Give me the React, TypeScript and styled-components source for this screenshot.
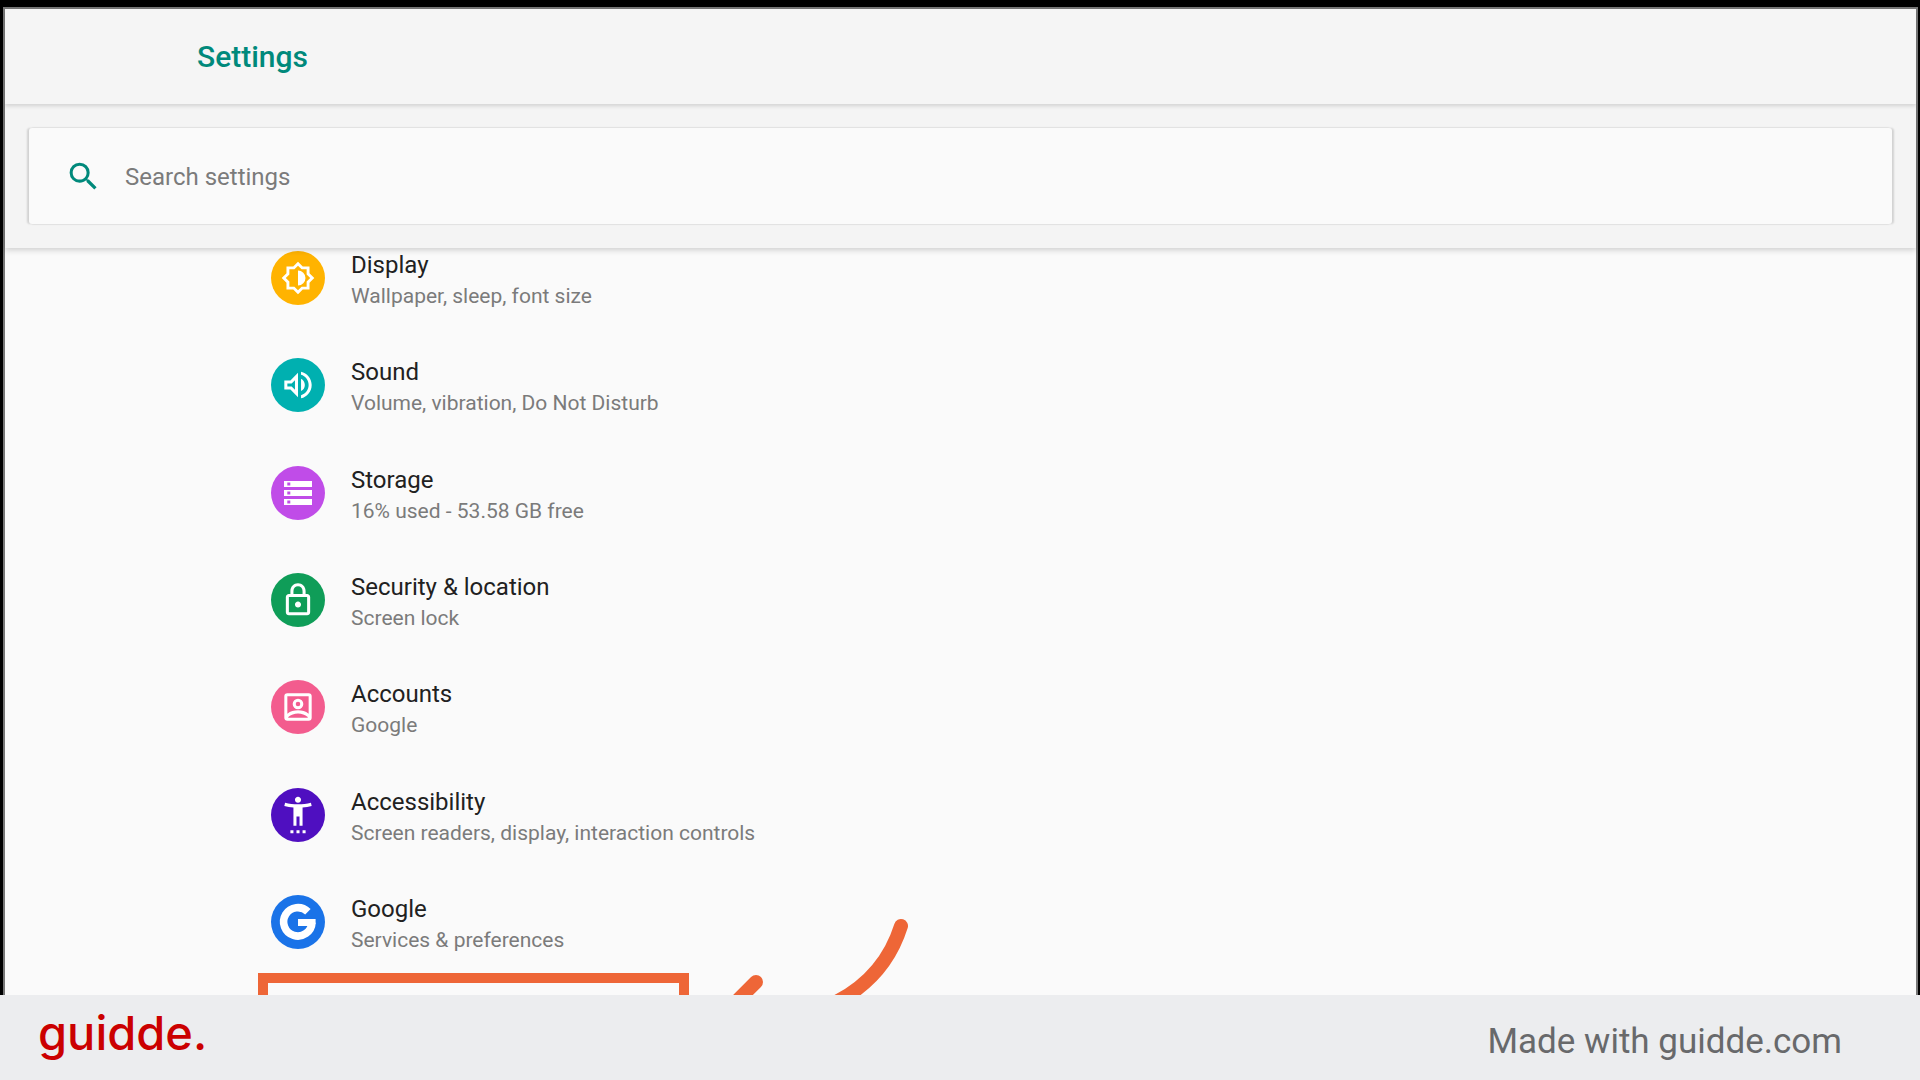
import React from "react";
import styled, { createGlobalStyle } from "styled-components";

const GlobalStyle = createGlobalStyle`
  *, *::before, *::after { box-sizing: border-box; }
  body {
    margin: 0;
    background: #000;
    font-family: Roboto, "Noto Sans", sans-serif;
  }
`;

const Page = styled.div`
  display: flex;
  flex-direction: column;
  min-height: 100vh;
`;

const Screen = styled.div`
  flex: 1;
  display: flex;
  padding: 7px 2px 0 3px;
  background: #000;
`;

const Device = styled.div`
  flex: 1;
  display: flex;
  flex-direction: column;
  min-width: 0;
  border: 2px solid #777;
  border-bottom: none;
  background: #fafafa;
`;

const Header = styled.header`
  position: relative;
  display: flex;
  align-items: center;
  height: 95px;
  padding: 0 192px;
  background: #f5f5f5;
  box-shadow: 0 2px 4px rgba(0, 0, 0, 0.14);
  z-index: 2;
`;

const Title = styled.h1`
  margin: 0;
  font-size: 30px;
  font-weight: 500;
  line-height: 36px;
  color: #00897b;
`;

const SearchArea = styled.div`
  position: relative;
  padding: 24px;
  background: #f4f4f4;
  box-shadow: 0 2px 6px rgba(0, 0, 0, 0.18);
  z-index: 1;
`;

const SearchBox = styled.label`
  display: flex;
  align-items: center;
  gap: 23px;
  height: 96px;
  padding: 0 36px;
  border-radius: 3px;
  background: #fafafa;
  box-shadow: -2px 0 2px rgba(0, 0, 0, 0.14), 2px 0 2px rgba(0, 0, 0, 0.14);
`;

const SearchIcon = styled.svg`
  flex: none;
  width: 37px;
  height: 37px;
  fill: #00897b;
`;

const SearchInput = styled.input`
  flex: 1;
  min-width: 0;
  padding: 2px 0 0;
  border: none;
  outline: none;
  background: transparent;
  font-family: inherit;
  font-size: 24px;
  line-height: 28px;
  color: #212121;
  &::placeholder {
    color: #7b7b7b;
    opacity: 1;
  }
`;

const Main = styled.main`
  position: relative;
  flex: 1;
  display: flex;
  overflow: hidden;
`;

const List = styled.nav`
  flex: 1;
  display: flex;
  flex-direction: column;
  justify-content: space-between;
  gap: 24px;
  padding: 3px 266px 42px;
`;

const Row = styled.a`
  display: flex;
  align-items: flex-start;
  gap: 26px;
  color: inherit;
  text-decoration: none;
`;

const Badge = styled.span<{ $color: string }>`
  flex: none;
  display: flex;
  width: 54px;
  height: 54px;
  border-radius: 50%;
  background: ${(p) => p.$color};
`;

const Glyph = styled.svg`
  width: 54px;
  height: 54px;
  fill: #fff;
`;

const Labels = styled.span`
  display: flex;
  flex-direction: column;
  gap: 4px;
`;

const Name = styled.span`
  font-size: 24px;
  line-height: 28px;
  color: #212121;
`;

const Summary = styled.span`
  font-size: 21px;
  line-height: 26px;
  color: #7b7b7b;
`;

const Highlight = styled.div`
  position: absolute;
  left: 253px;
  top: 725px;
  width: 431px;
  height: 100px;
  border: 10px solid #ee6637;
`;

const Arrow = styled.svg`
  position: absolute;
  left: 695px;
  top: 652px;
  width: 240px;
  height: 160px;
  fill: none;
  stroke: #ee6637;
  stroke-width: 14px;
  stroke-linecap: round;
  stroke-linejoin: round;
`;

const Footer = styled.footer`
  display: flex;
  align-items: center;
  justify-content: space-between;
  height: 85px;
  padding: 0 78px 0 38px;
  background: #ecedef;
`;

const Brand = styled.a`
  padding-bottom: 10px;
  font-family: Inter, "Open Sans", sans-serif;
  font-size: 47px;
  font-weight: 500;
  line-height: 56px;
  color: #cb0000;
  text-decoration: none;
`;

const Credit = styled.span`
  padding-top: 8px;
  font-size: 35px;
  line-height: 42px;
  color: #68696b;
`;

// Material glyphs live on a 24-unit grid; they are padded out to fill the badge.
const Material = ({ d }: { d: string }) => (
  <Glyph viewBox="-5.76 -5.76 35.52 35.52" aria-hidden="true">
    <path fillRule="evenodd" d={d} />
  </Glyph>
);

const items = [
  {
    name: "Display",
    summary: "Wallpaper, sleep, font size",
    color: "#ffb300",
    icon: (
      <Glyph viewBox="-6.75 -6.75 37.5 37.5" aria-hidden="true">
        <path
          fillRule="evenodd"
          d="M20 15.31 23.31 12 20 8.69V4h-4.69L12 .69 8.69 4H4v4.69L.69 12 4 15.31V20h4.69L12 23.31 15.31 20H20zM18 14.48V18h-3.52L12 20.48 9.52 18H6v-3.52L3.52 12 6 9.52V6h3.52L12 3.52 14.48 6H18v3.52L20.48 12z"
        />
        <path d="M12 6.8v10.4a5.2 5.2 0 0 0 0-10.4z" />
      </Glyph>
    ),
  },
  {
    name: "Sound",
    summary: "Volume, vibration, Do Not Disturb",
    color: "#00b0b0",
    icon: (
      <Material d="M3 9v6h4l5 5V4L7 9H3zm7-.17v6.34L7.83 13H5v-2h2.83L10 8.83zM16.5 12c0-1.77-1.02-3.29-2.5-4.03v8.05c1.48-.73 2.5-2.25 2.5-4.02zM14 3.23v2.06c2.89.86 5 3.54 5 6.71s-2.11 5.85-5 6.71v2.06c4.01-.91 7-4.49 7-8.77s-2.99-7.86-7-8.77z" />
    ),
  },
  {
    name: "Storage",
    summary: "16% used - 53.58 GB free",
    color: "#c04ce8",
    icon: (
      <Glyph viewBox="0 0 54 54" aria-hidden="true">
        <path
          fillRule="evenodd"
          d="M13 15h28v6H13zM16.3 16.5v3h3v-3zM13 24h28v6H13zM16.3 25.5v3h3v-3zM13 33h28v6H13zM16.3 34.5v3h3v-3z"
        />
      </Glyph>
    ),
  },
  {
    name: "Security & location",
    summary: "Screen lock",
    color: "#0f9d58",
    icon: (
      <Material d="M18 8h-1V6c0-2.76-2.24-5-5-5S7 3.24 7 6v2H6c-1.1 0-2 .9-2 2v10c0 1.1.9 2 2 2h12c1.1 0 2-.9 2-2V10c0-1.1-.9-2-2-2zM9 6c0-1.66 1.34-3 3-3s3 1.34 3 3v2H9V6zm9 14H6V10h12v10zm-6-3c1.1 0 2-.9 2-2s-.9-2-2-2-2 .9-2 2 .9 2 2 2z" />
    ),
  },
  {
    name: "Accounts",
    summary: "Google",
    color: "#f35c8e",
    icon: (
      <Material d="M19 3H5a2 2 0 0 0-2 2v14a2 2 0 0 0 2 2h14a2 2 0 0 0 2-2V5a2 2 0 0 0-2-2zM19 5v11.4c-2-1.5-4.4-2.2-7-2.2s-5 .7-7 2.2V5zM5.6 18.5c1.8-1.5 4-2.3 6.4-2.3s4.6.8 6.4 2.3V19H5.6zM12 13.5a3.5 3.5 0 1 0 0-7 3.5 3.5 0 0 0 0 7zM12 11.5a1.5 1.5 0 1 1 0-3 1.5 1.5 0 0 1 0 3z" />
    ),
  },
  {
    name: "Accessibility",
    summary: "Screen readers, display, interaction controls",
    color: "#4f0fc0",
    icon: (
      <Material d="M20.5 4c-2.61.7-5.67 1-8.5 1s-5.89-.3-8.5-1L3 6c1.86.5 4 .83 6 1v12h2v-6h2v6h2V7c2-.17 4.14-.5 6-1zM12 4c1.1 0 2-.9 2-2s-.9-2-2-2-2 .9-2 2 .9 2 2 2zM7 24h2v-2H7zM11 24h2v-2h-2zM15 24h2v-2h-2z" />
    ),
  },
  {
    name: "Google",
    summary: "Services & preferences",
    color: "#1a73e8",
    icon: (
      <Glyph viewBox="0 0 54 54" aria-hidden="true">
        <path
          d="M36.9 16.8A14.2 14.2 0 1 0 41 27.5"
          fill="none"
          stroke="#fff"
          strokeWidth="7.6"
        />
        <path d="M27 24h17.6v4l-1.5 3H27z" />
      </Glyph>
    ),
  },
];

export default function App() {
  return (
    <>
      <GlobalStyle />
      <Page>
        <Screen>
          <Device>
            <Header>
              <Title>Settings</Title>
            </Header>
            <SearchArea>
              <SearchBox htmlFor="search">
                <SearchIcon viewBox="0 0 24 24" aria-hidden="true">
                  <path d="M15.5 14h-.79l-.28-.27A6.471 6.471 0 0 0 16 9.5 6.5 6.5 0 1 0 9.5 16c1.61 0 3.09-.59 4.23-1.57l.27.28v.79l5 4.99L20.49 19l-4.99-5zm-6 0C7.01 14 5 11.99 5 9.5S7.01 5 9.5 5 14 7.01 14 9.5 11.99 14 9.5 14z" />
                </SearchIcon>
                <SearchInput
                  id="search"
                  type="text"
                  placeholder="Search settings"
                  aria-label="Search settings"
                />
              </SearchBox>
            </SearchArea>
            <Main>
              <List aria-label="Settings">
                {items.map((item) => (
                  <Row href="#" key={item.name}>
                    <Badge $color={item.color}>{item.icon}</Badge>
                    <Labels>
                      <Name>{item.name}</Name>
                      <Summary>{item.summary}</Summary>
                    </Labels>
                  </Row>
                ))}
              </List>
              <Highlight />
              <Arrow viewBox="700 900 240 160" aria-hidden="true">
                <path d="M901 926Q884 980 830 1005T720 1020" />
                <path d="M756 982L718 1020" />
              </Arrow>
            </Main>
          </Device>
        </Screen>
        <Footer>
          <Brand href="#">guidde.</Brand>
          <Credit>Made with guidde.com</Credit>
        </Footer>
      </Page>
    </>
  );
}
